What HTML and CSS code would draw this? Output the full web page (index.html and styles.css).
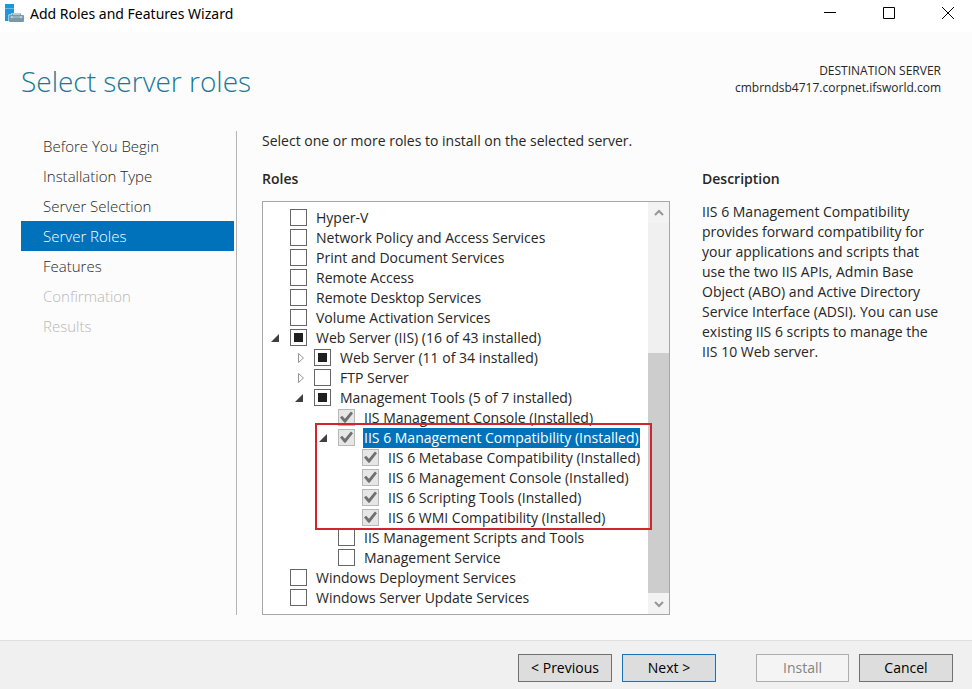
FILE: index.html
```html
<!DOCTYPE html>
<html lang="en">
<head>
<meta charset="utf-8">
<title>Add Roles and Features Wizard</title>
<link rel="stylesheet" href="styles.css">
</head>
<body>
<div class="window">
  <header class="titlebar">
    <svg class="app-icon" width="20" height="20" viewBox="0 0 20 20" aria-hidden="true">
      <path fill="#1e96d8" d="M0 0h9v9H6.500v1.500H3.500V17H0z"/>
      <path stroke="#8ccbef" stroke-width=".7" d="M0 4.500h9"/>
      <path fill="none" stroke="#7898a8" stroke-width="1.200" d="M7.500 11.500V10h8v1.500"/>
      <rect x="4" y="11" width="15" height="7" rx="1" fill="#7898a8"/>
      <path stroke="#c4d4dc" stroke-width=".8" d="M5.500 13h12"/>
      <path stroke="#fff" stroke-width=".8" d="M7 12.200v2M16 12.200v2"/>
    </svg>
    <span class="app-title">Add Roles and Features Wizard</span>
    <div class="window-controls">
      <button type="button" aria-label="Minimize"><svg width="14" height="14" viewBox="0 0 14 14"><path d="M1 6.500h12"/></svg></button>
      <button type="button" aria-label="Maximize"><svg width="14" height="14" viewBox="0 0 14 14"><path d="M1.500 1.500h11v11h-11z"/></svg></button>
      <button type="button" aria-label="Close"><svg width="14" height="14" viewBox="0 0 14 14"><path d="M1 1l12 12M13 1L1 13"/></svg></button>
    </div>
  </header>

  <div class="heading">
    <h1>Select server roles</h1>
    <div class="destination">
      <div>DESTINATION SERVER</div>
      <div>cmbrndsb4717.corpnet.ifsworld.com</div>
    </div>
  </div>

  <div class="content">
    <nav class="steps" aria-label="Wizard steps">
      <a href="#">Before You Begin</a>
      <a href="#">Installation Type</a>
      <a href="#">Server Selection</a>
      <a href="#" class="current" aria-current="step">Server Roles</a>
      <a href="#">Features</a>
      <a class="disabled" aria-disabled="true">Confirmation</a>
      <a class="disabled" aria-disabled="true">Results</a>
    </nav>

    <main class="main">
      <p class="intro">Select one or more roles to install on the selected server.</p>
      <div class="panes">
        <section class="roles">
          <h2>Roles</h2>
          <div class="role-list">
            <ul class="tree">
              <li><div class="row"><span class="toggle"></span><input type="checkbox" id="r1"><label for="r1">Hyper-V</label></div></li>
              <li><div class="row"><span class="toggle"></span><input type="checkbox" id="r2"><label for="r2">Network Policy and Access Services</label></div></li>
              <li><div class="row"><span class="toggle"></span><input type="checkbox" id="r3"><label for="r3">Print and Document Services</label></div></li>
              <li><div class="row"><span class="toggle"></span><input type="checkbox" id="r4"><label for="r4">Remote Access</label></div></li>
              <li><div class="row"><span class="toggle"></span><input type="checkbox" id="r5"><label for="r5">Remote Desktop Services</label></div></li>
              <li><div class="row"><span class="toggle"></span><input type="checkbox" id="r6"><label for="r6">Volume Activation Services</label></div></li>
              <li>
                <div class="row"><span class="toggle open"></span><input type="checkbox" id="r7" class="partial"><label for="r7">Web Server (IIS) (16 of 43 installed)</label></div>
                <ul>
                  <li><div class="row"><span class="toggle closed"><svg width="8" height="12" viewBox="0 0 8 12"><path d="M1.500 1.500v9l5-4.500z"/></svg></span><input type="checkbox" id="r8" class="partial"><label for="r8">Web Server (11 of 34 installed)</label></div></li>
                  <li><div class="row"><span class="toggle closed"><svg width="8" height="12" viewBox="0 0 8 12"><path d="M1.500 1.500v9l5-4.500z"/></svg></span><input type="checkbox" id="r9"><label for="r9">FTP Server</label></div></li>
                  <li>
                    <div class="row"><span class="toggle open"></span><input type="checkbox" id="r10" class="partial"><label for="r10">Management Tools (5 of 7 installed)</label></div>
                    <ul>
                      <li><div class="row"><span class="toggle"></span><input type="checkbox" id="r11" checked disabled><label for="r11">IIS Management Console (Installed)</label></div></li>
                      <li class="highlighted">
                        <div class="row selected"><span class="toggle open"></span><input type="checkbox" id="r12" checked disabled><label for="r12">IIS 6 Management Compatibility (Installed)</label></div>
                        <ul>
                          <li><div class="row"><span class="toggle"></span><input type="checkbox" id="r13" checked disabled><label for="r13">IIS 6 Metabase Compatibility (Installed)</label></div></li>
                          <li><div class="row"><span class="toggle"></span><input type="checkbox" id="r14" checked disabled><label for="r14">IIS 6 Management Console (Installed)</label></div></li>
                          <li><div class="row"><span class="toggle"></span><input type="checkbox" id="r15" checked disabled><label for="r15">IIS 6 Scripting Tools (Installed)</label></div></li>
                          <li><div class="row"><span class="toggle"></span><input type="checkbox" id="r16" checked disabled><label for="r16">IIS 6 WMI Compatibility (Installed)</label></div></li>
                        </ul>
                      </li>
                      <li><div class="row"><span class="toggle"></span><input type="checkbox" id="r17"><label for="r17">IIS Management Scripts and Tools</label></div></li>
                      <li><div class="row"><span class="toggle"></span><input type="checkbox" id="r18"><label for="r18">Management Service</label></div></li>
                    </ul>
                  </li>
                </ul>
              </li>
              <li><div class="row"><span class="toggle"></span><input type="checkbox" id="r19"><label for="r19">Windows Deployment Services</label></div></li>
              <li><div class="row"><span class="toggle"></span><input type="checkbox" id="r20"><label for="r20">Windows Server Update Services</label></div></li>
            </ul>
            <div class="scrollbar">
              <button type="button" aria-label="Scroll up"><svg width="10" height="8" viewBox="0 0 10 8"><path d="M1 6l4-4 4 4"/></svg></button>
              <div class="track"><div class="thumb"></div></div>
              <button type="button" aria-label="Scroll down"><svg width="10" height="8" viewBox="0 0 10 8"><path d="M1 2l4 4 4-4"/></svg></button>
            </div>
          </div>
        </section>
        <section class="description">
          <h2>Description</h2>
          <p>IIS 6 Management Compatibility provides forward compatibility for your applications and scripts that use the two IIS APIs, Admin Base Object (ABO) and Active Directory Service Interface (ADSI). You can use existing IIS 6 scripts to manage the IIS 10 Web server.</p>
        </section>
      </div>
    </main>
  </div>

  <footer class="actions">
    <button type="button">&lt; Previous</button>
    <button type="button" class="default">Next &gt;</button>
    <button type="button" class="install" disabled>Install</button>
    <button type="button" class="cancel">Cancel</button>
  </footer>
</div>
</body>
</html>
```
FILE: styles.css
```css
* { box-sizing: border-box; }

body {
  margin: 0;
  font: 14px/20px "Open Sans", "Noto Sans", sans-serif;
  color: #262626;
}

h1, h2, p, ul { margin: 0; padding: 0; }
ul { list-style: none; }
button { font: inherit; }

.window {
  display: flex;
  flex-direction: column;
  min-height: 100vh;
  background: #fcfcfc;
}

.titlebar {
  display: flex;
  align-items: center;
  height: 32px;
  padding: 0 0 4px 5px;
  gap: 5px;
  background: #fff;
}
.app-title {
  font-family: "Noto Sans", sans-serif;
  color: #000;
}
.window-controls {
  display: flex;
  margin-left: auto;
  padding: 0 4px 2px 0;
  gap: 19px;
}
.window-controls button {
  display: flex;
  justify-content: center;
  width: 40px;
  padding: 0;
  border: 0;
  background: none;
}
.window-controls path {
  fill: none;
  stroke: #000;
}

.heading {
  display: flex;
  justify-content: space-between;
  align-items: flex-start;
  padding: 30px 31px 0 21px;
}
h1 {
  font-size: 28px;
  line-height: 38px;
  font-weight: 300;
  color: #197898;
}
.destination {
  font-size: 12px;
  line-height: 17px;
  text-align: right;
}

.content {
  display: flex;
  flex: 1;
  padding: 31px 31px 25px 21px;
  gap: 25px;
}
.steps {
  width: 216px;
  flex: none;
  padding-right: 2px;
  border-right: 1px solid #b4b4b4;
}
.steps a {
  display: block;
  padding-left: 22px;
  font-size: 15px;
  line-height: 30px;
  font-weight: 300;
  color: #262626;
  text-decoration: none;
}
.steps .current {
  background: #0072bc;
  color: #fff;
}
.steps .disabled { color: #b8b8b8; }

.main {
  display: flex;
  flex: 1;
  flex-direction: column;
}
.panes {
  display: grid;
  flex: 1;
  grid-template-columns: 408px 1fr;
  gap: 32px;
  padding-top: 18px;
}
h2 {
  font-size: 14px;
  line-height: 20px;
  font-weight: 600;
}
.roles {
  display: flex;
  flex-direction: column;
}
.role-list {
  display: flex;
  flex: 1;
  margin-top: 12px;
  border: 1px solid #a6a6a6;
  background: #fff;
}
.tree {
  flex: 1;
  padding: 6px 0 4px 8px;
}
.tree ul { padding-left: 24px; }
.row {
  display: flex;
  align-items: center;
  height: 20px;
}
.row label {
  margin-left: 8px;
  padding: 0 1px;
  white-space: nowrap;
}
.selected label {
  background: #0072bc;
  color: #fff;
}

.toggle {
  display: flex;
  justify-content: center;
  width: 19px;
  flex: none;
  padding-right: 3px;
}
.toggle.closed {
  justify-content: flex-start;
  padding-left: 2px;
}
.toggle.open { justify-content: flex-start; }
.toggle.open::before {
  content: "";
  width: 8px;
  height: 8px;
  background: #404040;
  clip-path: polygon(100% 0, 100% 100%, 0 100%);
}
.toggle path {
  fill: #fff;
  stroke: #969696;
}

.row input {
  display: grid;
  place-content: center;
  width: 17px;
  height: 17px;
  flex: none;
  margin: 0 0 2px;
  appearance: none;
  border: 1px solid #666;
  background: #fff;
}
.row input.partial::before {
  content: "";
  width: 9px;
  height: 9px;
  background: #202020;
}
.row input:checked {
  border-color: #b8b8b8;
  background: #e6e6e6;
}
.row input:checked::before {
  content: "";
  width: 13px;
  height: 12px;
  background: #707070;
  clip-path: polygon(0 55%, 16% 40%, 38% 65%, 84% 5%, 100% 18%, 43% 98%, 34% 98%);
}

.highlighted { position: relative; }
.highlighted::after {
  content: "";
  position: absolute;
  inset: -5px -4px -2px -4px;
  border: 2px solid #d0252c;
  pointer-events: none;
}

.scrollbar {
  display: flex;
  flex-direction: column;
  width: 21px;
  background: #f0f0f0;
}
.scrollbar button {
  display: flex;
  align-items: center;
  justify-content: center;
  height: 21px;
  padding: 0;
  border: 0;
  background: #f3f3f3;
}
.scrollbar path {
  fill: none;
  stroke: #969696;
  stroke-width: 2;
}
.track {
  display: flex;
  flex: 1;
  align-items: flex-end;
}
.thumb {
  width: 100%;
  height: 65%;
  background: #cdcdcd;
}

.description p { margin-top: 13px; }

.actions {
  display: flex;
  justify-content: flex-end;
  gap: 10px;
  padding: 13px 19px 7px;
  border-top: 1px solid #dfdfdf;
  background: #f0f0f0;
}
.actions button {
  width: 94px;
  height: 28px;
  padding: 0;
  border: 1px solid #707070;
  background: #ddd;
  color: #000;
}
.actions .default {
  border-color: #1a72b8;
  box-shadow: inset 0 0 0 1px #c4e2f5;
}
.actions .install {
  width: 93px;
  margin-left: 30px;
  border-color: #adadad;
  background: #f4f4f4;
  color: #838383;
}
```
